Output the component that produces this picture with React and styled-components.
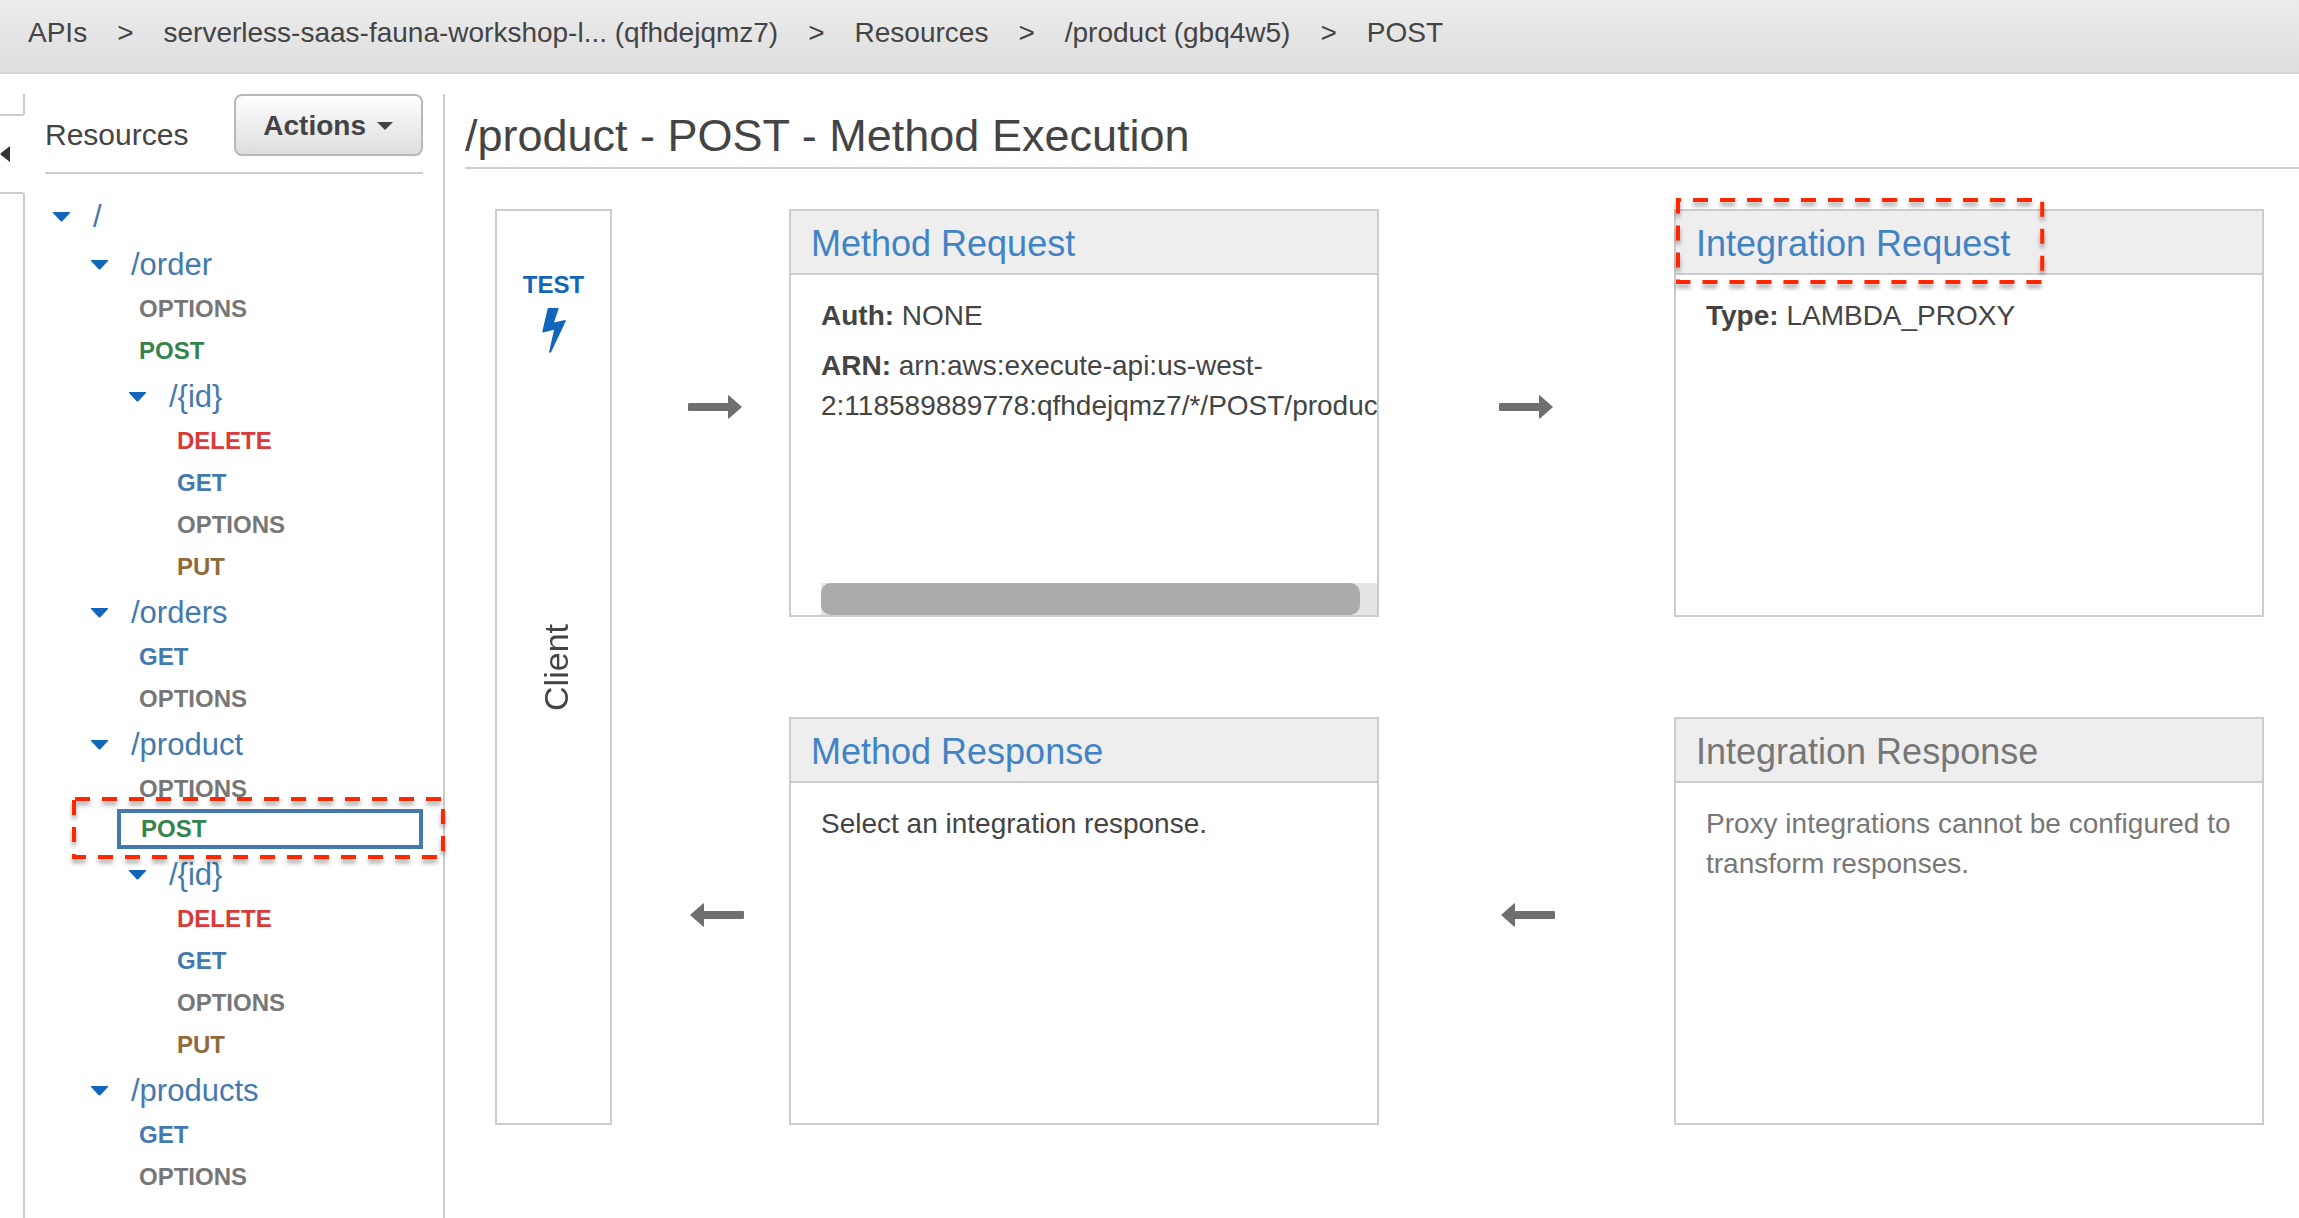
import styled, { createGlobalStyle } from "styled-components";

const METHOD_COLORS={
  GET:"#4479ae",
  POST:"#35844e",
  PUT:"#8f6a3d",
  DELETE:"#d93a3a",
  OPTIONS:"#777777",
};

const crumbs=[
  "APIs",
  "serverless-saas-fauna-workshop-l... (qfhdejqmz7)",
  "Resources",
  "/product (gbq4w5)",
  "POST",
];

const tree={
  path:"/",
  methods:[],
  children:[
    {
      path:"/order",
      methods:["OPTIONS","POST"],
      children:[{path:"/{id}",methods:["DELETE","GET","OPTIONS","PUT"],children:[]}],
    },
    {path:"/orders",methods:["GET","OPTIONS"],children:[]},
    {
      path:"/product",
      methods:["OPTIONS","POST"],
      selected:"POST",
      children:[{path:"/{id}",methods:["DELETE","GET","OPTIONS","PUT"],children:[]}],
    },
    {path:"/products",methods:["GET","OPTIONS"],children:[]},
  ],
};

const Marker=({area,offset})=>(
  <Outline $area={area} aria-hidden="true">
    <rect width="100%" height="100%" strokeDasharray="15 12" strokeDashoffset={offset}/>
  </Outline>
);

const Arrow=({back})=>(
  <ArrowCell>
    <svg width="58" height="24" viewBox="0 0 58 24" fill="#6f6f6f" aria-hidden="true">
      {back
        ? <path d="M3 12 L16 0.5 Q17 0 17 1 V8 H56 Q57 8 57 9 V15 Q57 16 56 16 H17 V23 Q17 24 16 23.5 Z"/>
        : <path d="M55 12 L42 0.5 Q41 0 41 1 V8 H2 Q1 8 1 9 V15 Q1 16 2 16 H41 V23 Q41 24 42 23.5 Z"/>}
    </svg>
  </ArrowCell>
);

const Resource=({node})=>(
  <li>
    <ResourceRow>
      <Toggle aria-label={"Collapse "+node.path}>
        <svg width="17" height="10" viewBox="0 0 17 10" fill="#1166bb">
          <path d="M0 0 H17 V1 L9.5 9 Q8.5 10 7.5 9 L0 1 Z"/>
        </svg>
      </Toggle>
      <ResourceLink href="#">{node.path}</ResourceLink>
    </ResourceRow>
    {node.methods.length>0 && (
      <MethodList>
        {node.methods.map((method)=>(
          <Method key={method} $selected={node.selected===method}>
            <MethodLink href="#" $color={METHOD_COLORS[method]}>{method}</MethodLink>
            {node.selected===method && <Marker area="-14px -24px -12px -47px" offset="-1"/>}
          </Method>
        ))}
      </MethodList>
    )}
    {node.children.length>0 && (
      <SubTree>
        {node.children.map((child)=><Resource key={child.path} node={child}/>)}
      </SubTree>
    )}
  </li>
);

const App=()=>{
return(
<Page>
  <GlobalStyle/>
  <Breadcrumb aria-label="Breadcrumb">
    {crumbs.map((crumb,i)=>(
      <Crumb key={crumb}>
        {i>0 && <span>&gt;</span>}
        <CrumbLink href="#">{crumb}</CrumbLink>
      </Crumb>
    ))}
  </Breadcrumb>
  <Body>
    <Gutter>
      <GutterTop/>
      <CollapseButton aria-label="Collapse panel">
        <svg width="10" height="16" viewBox="0 0 10 16" fill="#333333">
          <path d="M10 0 V16 L1 9 Q0 8 1 7 Z"/>
        </svg>
      </CollapseButton>
      <GutterBottom/>
    </Gutter>
    <Sidebar>
      <SidebarHeader>
        <SidebarTitle>Resources</SidebarTitle>
        <ActionsButton>
          Actions
          <svg width="16" height="8" viewBox="0 0 16 8" fill="#444444" aria-hidden="true">
            <path d="M0 0 H16 L8 8 Z"/>
          </svg>
        </ActionsButton>
      </SidebarHeader>
      <Tree>
        <Resource node={tree}/>
      </Tree>
    </Sidebar>
    <Main>
      <Title>/product - POST - Method Execution</Title>
      <Diagram>
        <Client>
          <TestLink href="#">
            TEST
            <svg width="24" height="45" viewBox="0 0 24 45" fill="#1166bb" aria-hidden="true">
              <path d="M7 0 H16 Q17 0 16.6 1 L12 14.6 L23 12 Q24 12 23.7 13.2 L9.2 44 Q8.6 45 7.6 44.8 Q7 44.6 7.1 44 L12 21.8 L1.2 24.5 Q0.2 24.6 0.3 23.4 L5.6 1 Q6 0 7 0 Z"/>
            </svg>
          </TestLink>
          <ClientLabel>Client</ClientLabel>
        </Client>
        <Arrow/>
        <Card>
          <CardHeader>
            <CardLink href="#">Method Request</CardLink>
          </CardHeader>
          <CardBody>
            <p><b>Auth:</b> NONE</p>
            <p>
              <b>ARN:</b> arn:aws:execute-api:us-west-<wbr/>
              <NoWrap>2:118589889778:qfhdejqmz7/*/POST/product</NoWrap>
            </p>
          </CardBody>
          <ScrollTrack>
            <ScrollThumb/>
          </ScrollTrack>
        </Card>
        <Arrow/>
        <Card>
          <CardHeader>
            <CardLink href="#">
              Integration Request
              <Marker area="-24px -32px -18px -18px" offset="-15"/>
            </CardLink>
          </CardHeader>
          <CardBody>
            <p><b>Type:</b> LAMBDA_PROXY</p>
          </CardBody>
        </Card>
        <Arrow back/>
        <Card>
          <CardHeader>
            <CardLink href="#">Method Response</CardLink>
          </CardHeader>
          <CardBody>
            <p>Select an integration response.</p>
          </CardBody>
        </Card>
        <Arrow back/>
        <Card $disabled>
          <CardHeader>
            <CardName>Integration Response</CardName>
          </CardHeader>
          <CardBody>
            <p>Proxy integrations cannot be configured to transform responses.</p>
          </CardBody>
        </Card>
      </Diagram>
    </Main>
  </Body>
</Page>
);
};

const GlobalStyle=createGlobalStyle`
*{
  box-sizing:border-box;
}
body{
  margin:0;
  background:#ffffff;
  color:#444444;
  font-family:"Liberation Sans",Arial,sans-serif;
  font-size:28px;
}
a{
  text-decoration:none;
}
ul{
  margin:0;
  padding:0;
  list-style:none;
}
button{
  font:inherit;
  color:inherit;
  cursor:pointer;
}
svg{
  display:block;
  flex-shrink:0;
}
`;
const Page=styled.div`
display:flex;
flex-direction:column;
min-height:100vh;
`;
const Breadcrumb=styled.nav`
display:flex;
gap:30px;
padding:1px 28px 7px;
line-height:64px;
white-space:nowrap;
background:linear-gradient(#ececec,#dedede);
border-bottom:2px solid #d5d5d5;
`;
const Crumb=styled.div`
display:flex;
gap:30px;
`;
const CrumbLink=styled.a`
color:#444444;
`;
const Body=styled.div`
flex:1;
display:flex;
padding-top:20px;
`;
const Gutter=styled.div`
width:25px;
flex-shrink:0;
display:flex;
flex-direction:column;
`;
const GutterTop=styled.div`
height:22px;
border:solid #cccccc;
border-width:0 2px 2px 0;
border-bottom-right-radius:3px;
`;
const GutterBottom=styled.div`
flex:1;
border:solid #cccccc;
border-width:2px 2px 0 0;
border-top-right-radius:3px;
`;
const CollapseButton=styled.button`
height:76px;
padding:0;
border:0;
background:none;
`;
const Sidebar=styled.aside`
width:420px;
flex-shrink:0;
padding:0 20px;
border-right:2px solid #cccccc;
`;
const SidebarHeader=styled.div`
display:flex;
justify-content:space-between;
align-items:flex-start;
height:80px;
border-bottom:2px solid #cccccc;
`;
const SidebarTitle=styled.h2`
margin:0;
padding-top:21px;
font-size:30px;
line-height:40px;
font-weight:normal;
`;
const ActionsButton=styled.button`
display:flex;
align-items:center;
gap:11px;
height:62px;
padding:2px 28px 0 27px;
font-weight:bold;
border:2px solid #b8b8b8;
border-radius:8px;
background:linear-gradient(#ffffff,#dddddd);
`;
const Tree=styled.ul`
padding-top:19px;
`;
const SubTree=styled.ul`
margin-left:38px;
`;
const ResourceRow=styled.div`
display:flex;
align-items:center;
gap:23px;
padding-left:8px;
line-height:48px;
`;
const Toggle=styled.button`
display:flex;
padding:0;
border:0;
background:none;
`;
const ResourceLink=styled.a`
font-size:31px;
color:#4479ae;
`;
const MethodList=styled.ul`
margin-left:34px;
font-size:24px;
font-weight:bold;
`;
const Method=styled.li`
position:relative;
height:40px;
margin-top:${(props)=>props.$selected ? "-2px" : "0"};
margin-bottom:2px;
padding-left:${(props)=>props.$selected ? "20px" : "22px"};
line-height:${(props)=>props.$selected ? "32px" : "40px"};
border:${(props)=>props.$selected ? "4px solid #4479ae" : "0"};
`;
const MethodLink=styled.a`
color:${(props)=>props.$color};
`;
/* red annotation, sits over whatever it surrounds */
const Outline=styled.svg`
position:absolute;
inset:${(props)=>props.$area};
width:-webkit-fill-available;
height:-webkit-fill-available;
overflow:visible;
pointer-events:none;
z-index:1;
fill:none;
stroke:#ff2600;
stroke-width:4px;
filter:drop-shadow(0 4px 2px rgba(0,0,0,0.35));
`;
const Main=styled.main`
flex:1;
min-width:0;
padding-left:20px;
`;
const Title=styled.h1`
margin:0;
padding:16px 0 5px;
font-size:45px;
line-height:52px;
font-weight:normal;
border-bottom:2px solid #cccccc;
`;
const Diagram=styled.div`
display:grid;
grid-template-columns:147px 147px minmax(0,1fr) 295px minmax(0,1fr);
row-gap:100px;
padding:40px 35px 40px 30px;
`;
const Client=styled.div`
grid-row:1 / span 2;
width:117px;
display:grid;
grid-template-rows:1fr auto 1fr;
justify-items:center;
border:2px solid #cccccc;
`;
const TestLink=styled.a`
display:flex;
flex-direction:column;
align-items:center;
gap:9px;
padding-top:60px;
font-size:24px;
line-height:28px;
font-weight:bold;
color:#1166bb;
`;
const ClientLabel=styled.span`
writing-mode:vertical-rl;
transform:rotate(180deg);
padding-right:4px;
font-size:34px;
line-height:40px;
`;
const ArrowCell=styled.div`
display:flex;
align-items:center;
justify-content:center;
padding-bottom:12px;
`;
const Card=styled.section`
display:flex;
flex-direction:column;
min-height:408px;
border:2px solid #cccccc;
color:${(props)=>props.$disabled ? "#777777" : "#444444"};
`;
const CardHeader=styled.header`
padding:13px 20px 9px;
font-size:36px;
line-height:40px;
background:#eeeeee;
border-bottom:2px solid #cccccc;
`;
const CardLink=styled.a`
display:inline-block;
vertical-align:top;
position:relative;
color:#4183c4;
`;
const CardName=styled.span`
display:block;
`;
const CardBody=styled.div`
flex:1;
margin-left:30px;
padding-top:21px;
overflow:hidden;
line-height:40px;
p{
  margin:0 0 10px;
}
`;
const NoWrap=styled.span`
white-space:nowrap;
`;
const ScrollTrack=styled.div`
height:32px;
margin-left:30px;
background:#e4e4e4;
`;
const ScrollThumb=styled.div`
width:97%;
height:100%;
border-radius:10px;
background:#ababab;
`;

export default App;
